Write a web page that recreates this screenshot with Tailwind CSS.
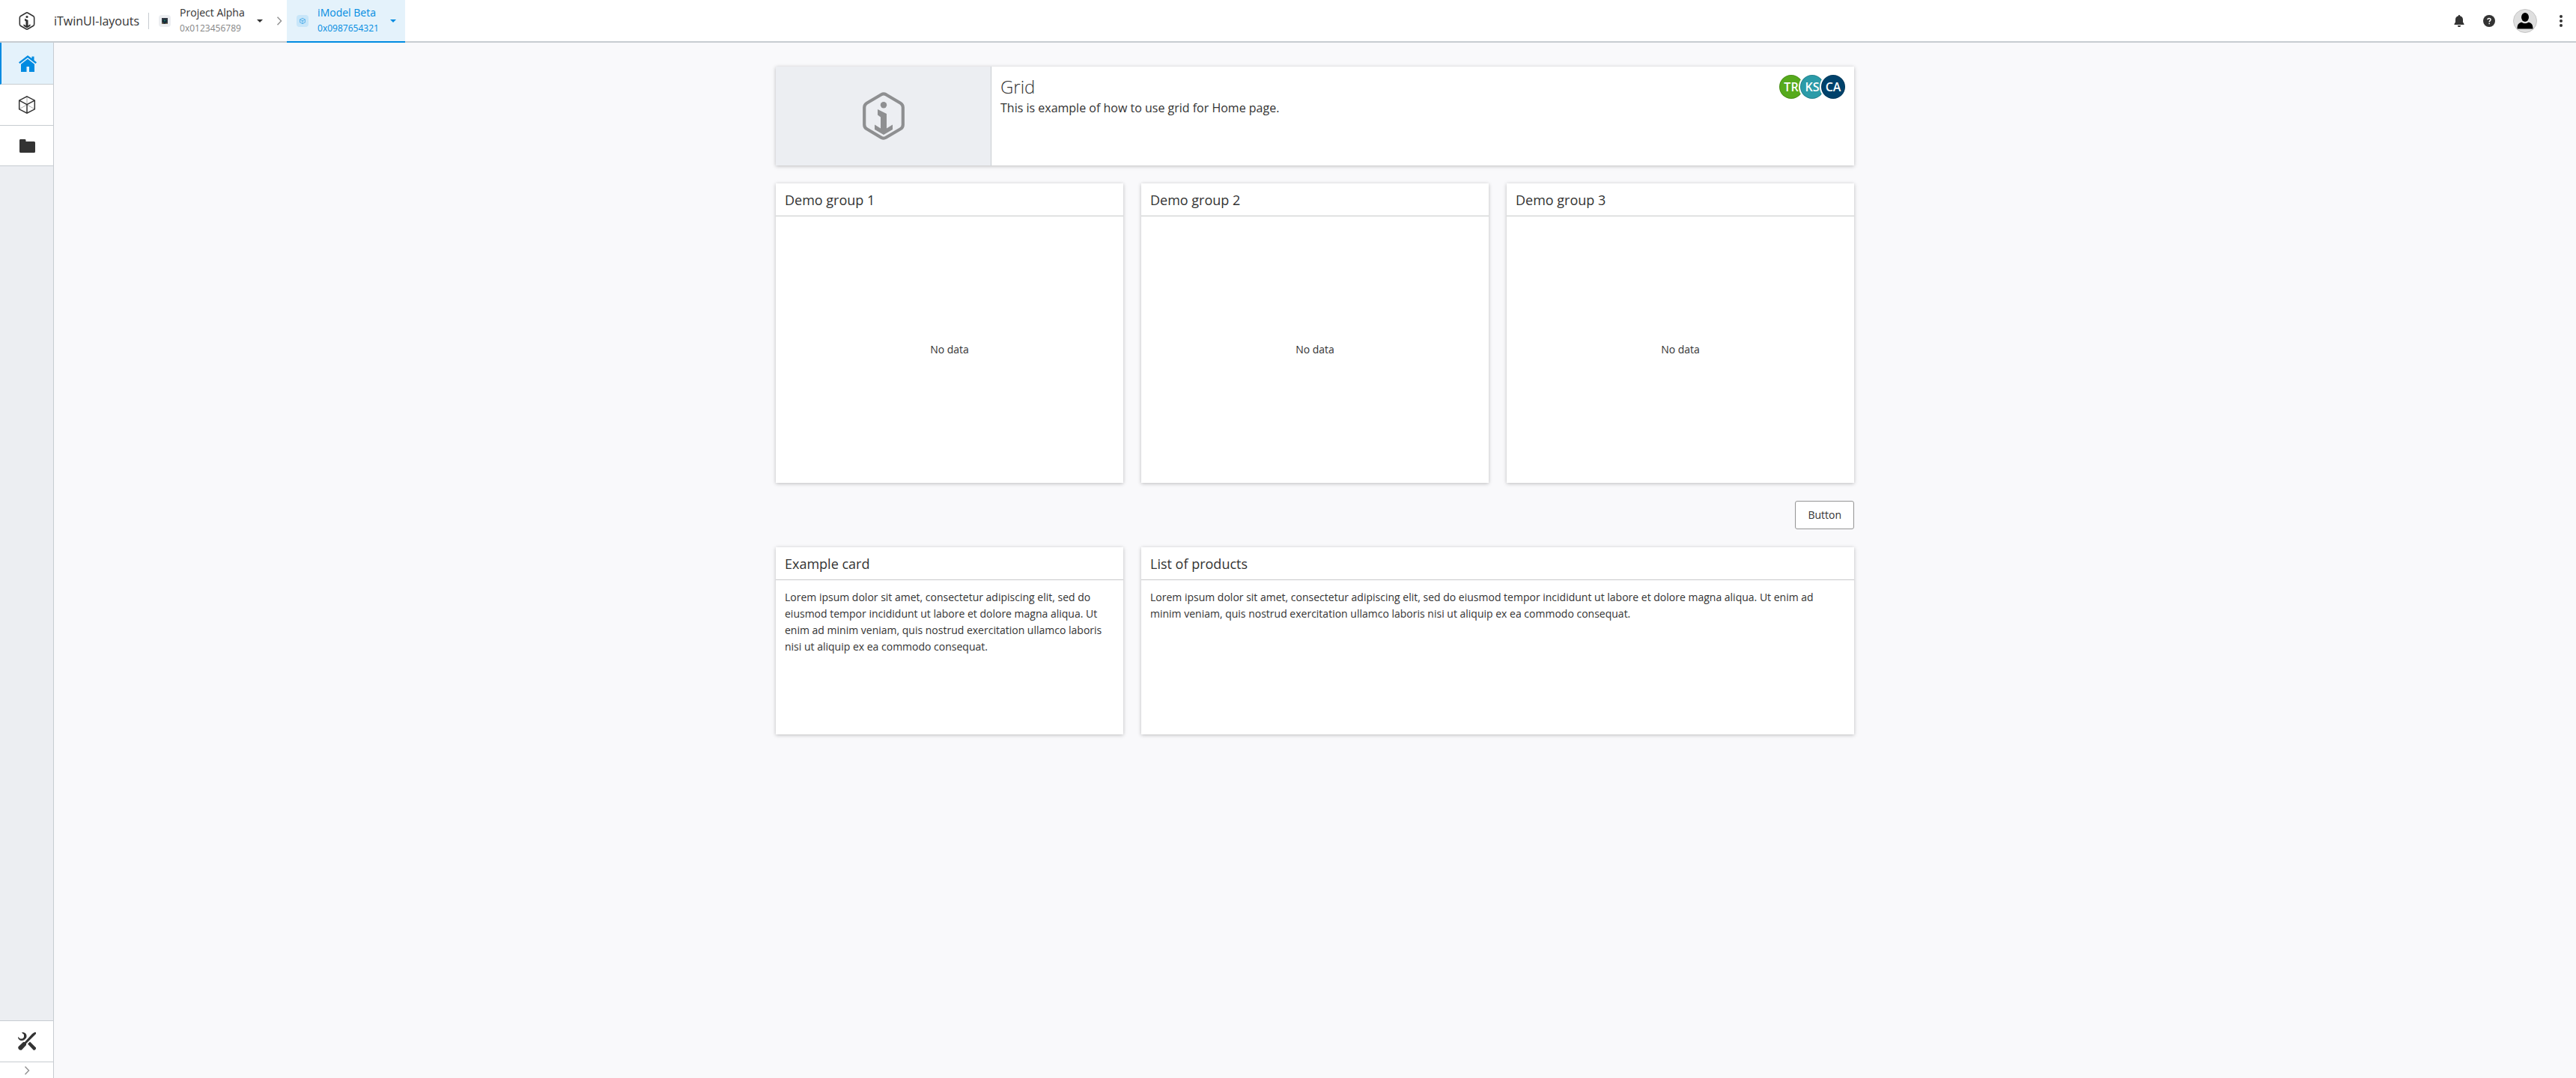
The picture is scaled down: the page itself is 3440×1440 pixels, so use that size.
<!DOCTYPE html>
<html lang="en">
<head>
<meta charset="utf-8">
<title>iTwinUI-layouts</title>
<script src="https://cdn.jsdelivr.net/npm/@tailwindcss/browser@4"></script>
</head>
<body class="flex min-h-screen flex-col bg-[#f9f9fb] font-['Open_Sans',sans-serif] text-sm text-[#333]">
<svg class="hidden" aria-hidden="true">
  <symbol id="itwin" viewBox="0 0 56 64">
    <path d="M31 3.200L50.500 14.700Q53.800 16.600 53.800 20.500V43.500Q53.800 47.400 50.500 49.300L31 60.800Q28 62.500 25 60.800L5.500 49.300Q2.200 47.400 2.200 43.500V20.500Q2.200 16.600 5.500 14.700L25 3.200Q28 1.500 31 3.200Z" fill="none" stroke="currentColor" stroke-width="4.200"/>
    <circle cx="28" cy="17.300" r="4.200" fill="currentColor"/>
    <path d="M20 23L32 29V48.500L40 43.500V50L28 57L16 50V43.500L24 48.500V33.500L20 30.500Z" fill="currentColor"/>
  </symbol>
  <symbol id="cube" viewBox="0 0 24 24">
    <path d="M12 1V12M2 17.500L12 12L22 17.500" fill="none" stroke="currentColor" stroke-opacity=".4"/>
    <path d="M12 .8L22.300 6.200V17.800L12 23.200L1.700 17.800V6.200ZM1.700 6.200L12 11.700L22.300 6.200M12 11.700V23.200" fill="none" stroke="currentColor" stroke-width="1.500"/>
  </symbol>
</svg>

<header class="flex h-[57px] items-stretch border-b-2 border-[#c7ccd1] bg-white">
  <a href="#" class="flex items-center">
    <span class="flex w-[72px] justify-center"><svg class="h-6 w-[22px]"><use href="#itwin"/></svg></span>
    <span class="text-base">iTwinUI-layouts</span>
  </a>
  <div class="ml-3 flex items-center"><span class="h-[22px] w-px bg-[#c7ccd1]"></span></div>
  <nav class="flex" aria-label="Breadcrumbs">
    <button class="flex items-center gap-3 pl-[13px] pr-3 text-left">
      <span class="flex size-4 items-center justify-center rounded-sm bg-[#eceef1]">
        <svg class="size-2" viewBox="0 0 8 8"><path fill="#343a45" d="M0 0h8v8H0z"/><circle cx="4" cy="4" r="2.500" fill="#0d2530"/><circle cx="4" cy="3.500" r="1.200" fill="#1d6a5c"/><path fill="#7a704e" d="M0 6.500h2V8H0zM5 7h3v1H5z"/></svg>
      </span>
      <span class="w-[91px]"><span class="block text-sm leading-5">Project Alpha</span><span class="block text-xs leading-[21px] text-[#858585]">0x0123456789</span></span>
      <svg class="h-1 w-2" viewBox="0 0 8 4"><path fill="currentColor" d="M0 0h8L4 4z"/></svg>
    </button>
    <span class="flex w-5 items-center justify-center text-[#949494]"><svg class="h-3 w-2" viewBox="0 0 8 12"><path d="M1.500 .7L6.500 6L1.500 11.300" fill="none" stroke="currentColor" stroke-width="1.500"/></svg></span>
    <button class="-mb-0.5 flex items-center gap-3 border-b-2 border-[#008be1] bg-[#e4f2fb] pl-[13px] pr-3 text-left text-[#008be1]">
      <span class="flex size-4 items-center justify-center rounded-sm bg-[#c8e6f9]"><svg class="size-2"><use href="#cube"/></svg></span>
      <span class="w-[85px]"><span class="block text-sm leading-5">iModel Beta</span><span class="block text-xs leading-[21px]">0x0987654321</span></span>
      <svg class="h-1 w-2" viewBox="0 0 8 4"><path fill="currentColor" d="M0 0h8L4 4z"/></svg>
    </button>
  </nav>
  <div class="ml-auto flex items-center gap-6 pr-3">
    <button aria-label="Notifications"><svg class="size-4" viewBox="0 0 16 16" fill="currentColor"><path d="M6 14h4v.5a1.500 1.500 0 0 1-1.500 1.500h-1A1.500 1.500 0 0 1 6 14.500zM8 0a1.200 1.200 0 0 1 1.200 1.200C11.700 1.800 13 3.700 13 6v3.500l1.500 2.500V13h-13v-1L3 9.500V6c0-2.300 1.300-4.200 3.800-4.800A1.200 1.200 0 0 1 8 0z"/></svg></button>
    <button aria-label="Help"><svg class="size-4" viewBox="0 0 16 16"><circle cx="8" cy="8" r="8" fill="currentColor"/><path d="M6 6.300C6 3.800 10 3.800 10 6.200C10 7.600 8.200 7.700 8.200 9.600M8.200 10.800V12.200" fill="none" stroke="white" stroke-width="1.500"/></svg></button>
    <button aria-label="User"><svg class="size-8" viewBox="0 0 32 32"><circle cx="16" cy="16" r="15.500" fill="#dfdfdf" stroke="#c6c6c6"/><ellipse cx="16" cy="11" rx="5" ry="6"/><path d="M5.500 26.500C5.500 20 8 18.500 11.500 17.700Q16 21 20.500 17.700C24 18.500 26.500 20 26.500 26.500z"/></svg></button>
    <button aria-label="More"><svg class="size-4" viewBox="0 0 16 16" fill="currentColor"><circle cx="8" cy="2" r="2"/><circle cx="8" cy="8" r="2"/><circle cx="8" cy="14" r="2"/></svg></button>
  </div>
</header>

<div class="flex flex-1">
  <aside class="flex w-[72px] shrink-0 flex-col border-r border-[#c7ccd1] bg-[#eceef2]">
    <button aria-label="Home" class="flex h-14 items-center justify-center border-b border-l-2 border-b-[#c7ccd1] border-l-[#008be1] bg-[#e4f2fb] text-[#008be1]">
      <svg class="size-6" viewBox="0 0 24 24" fill="currentColor"><path d="M12 1L17.500 5V2.500H20.500V7.500L24 10.300L22.500 12L12 4L1.500 12L0 10.300ZM12 5.700L21 12.700V23H14V16H10.500V23H3V12.700Z"/></svg>
    </button>
    <button aria-label="Models" class="flex h-[55px] items-center justify-center border-b border-[#c7ccd1] bg-white"><svg class="size-6"><use href="#cube"/></svg></button>
    <button aria-label="Documents" class="flex h-[54px] items-center justify-center border-b border-[#c7ccd1] bg-white"><svg class="size-6" viewBox="0 0 24 24" fill="currentColor"><path d="M3 3H9Q10.500 3 10.500 4.200V6H21.500Q23 6 23 7.500V19.500Q23 21 21.500 21H3.500Q2 21 2 19.500V4.500Q2 3 3 3z"/></svg></button>
    <button aria-label="Tools" class="mt-auto flex h-14 items-center justify-center border-y border-[#c7ccd1] bg-white"><svg class="size-6" viewBox="0 0 24 24" fill="currentColor"><path d="M22 0H24V2L13.500 12.500L11 15V17L5 23.500Q3 24.500 1.200 22.800Q-.5 21 .7 19L7 13L9 13L19 2ZM6 0C10.500 0 12.500 3.500 11 7.500L8.500 10C5 12.500 0 10.500 0 6L3 8.500H6L8 6.500V3L5 .5ZM13 15.500L16 12.500L24 20.500V22Q23 24 21 24Z"/></svg></button>
    <button aria-label="Expand" class="flex h-[21px] items-center justify-center bg-white text-[#949494]"><svg class="h-3 w-2" viewBox="0 0 8 12"><path d="M1.500 .7L6.500 6L1.500 11.300" fill="none" stroke="currentColor" stroke-width="1.500"/></svg></button>
  </aside>

  <main class="flex-1 px-6 py-8">
    <div class="mx-auto grid max-w-[1440px] grid-cols-3 gap-6">
      <section class="col-span-3 flex h-[132px] bg-white shadow-[0_1px_5px_rgba(0,0,0,0.25)]">
        <div class="flex w-1/5 items-center justify-center border-r border-[#c7ccd1] bg-[#eceef2] text-[#8e8f91]"><svg class="h-16 w-14"><use href="#itwin"/></svg></div>
        <div class="flex flex-1 justify-between px-3 py-[11px]">
          <div>
            <h1 class="text-2xl font-light">Grid</h1>
            <p class="text-base leading-6">This is example of how to use grid for Home page.</p>
          </div>
          <div class="flex -space-x-1 text-base font-semibold text-white">
            <span class="flex size-8 items-center justify-center rounded-full border border-black/15 bg-[#56aa1c]">TR</span>
            <span class="flex size-8 items-center justify-center rounded-full border border-black/15 bg-[#2b9ba8] shadow-[0_0_0_2px_white]">KS</span>
            <span class="flex size-8 items-center justify-center rounded-full border border-black/15 bg-[#00426b] shadow-[0_0_0_2px_white]">CA</span>
          </div>
        </div>
      </section>

      <section class="flex h-[400px] flex-col bg-white shadow-[0_1px_5px_rgba(0,0,0,0.25)]">
        <h2 class="flex h-11 items-center border-b border-[#c8c9ca] px-3 text-lg">Demo group 1</h2>
        <p class="flex flex-1 items-center justify-center">No data</p>
      </section>
      <section class="flex h-[400px] flex-col bg-white shadow-[0_1px_5px_rgba(0,0,0,0.25)]">
        <h2 class="flex h-11 items-center border-b border-[#c8c9ca] px-3 text-lg">Demo group 2</h2>
        <p class="flex flex-1 items-center justify-center">No data</p>
      </section>
      <section class="flex h-[400px] flex-col bg-white shadow-[0_1px_5px_rgba(0,0,0,0.25)]">
        <h2 class="flex h-11 items-center border-b border-[#c8c9ca] px-3 text-lg">Demo group 3</h2>
        <p class="flex flex-1 items-center justify-center">No data</p>
      </section>

      <div class="col-span-3 flex justify-end"><button class="h-[38px] rounded-[3px] border border-[#949494] bg-white px-4">Button</button></div>

      <section class="h-[250px] bg-white shadow-[0_1px_5px_rgba(0,0,0,0.25)]">
        <h2 class="flex h-11 items-center border-b border-[#c8c9ca] px-3 text-lg">Example card</h2>
        <p class="p-3 leading-[22px]">Lorem ipsum dolor sit amet, consectetur adipiscing elit, sed do eiusmod tempor incididunt ut labore et dolore magna aliqua. Ut enim ad minim veniam, quis nostrud exercitation ullamco laboris nisi ut aliquip ex ea commodo consequat.</p>
      </section>
      <section class="col-span-2 h-[250px] bg-white shadow-[0_1px_5px_rgba(0,0,0,0.25)]">
        <h2 class="flex h-11 items-center border-b border-[#c8c9ca] px-3 text-lg">List of products</h2>
        <p class="p-3 leading-[22px]">Lorem ipsum dolor sit amet, consectetur adipiscing elit, sed do eiusmod tempor incididunt ut labore et dolore magna aliqua. Ut enim ad minim veniam, quis nostrud exercitation ullamco laboris nisi ut aliquip ex ea commodo consequat.</p>
      </section>
    </div>
  </main>
</div>
</body>
</html>
